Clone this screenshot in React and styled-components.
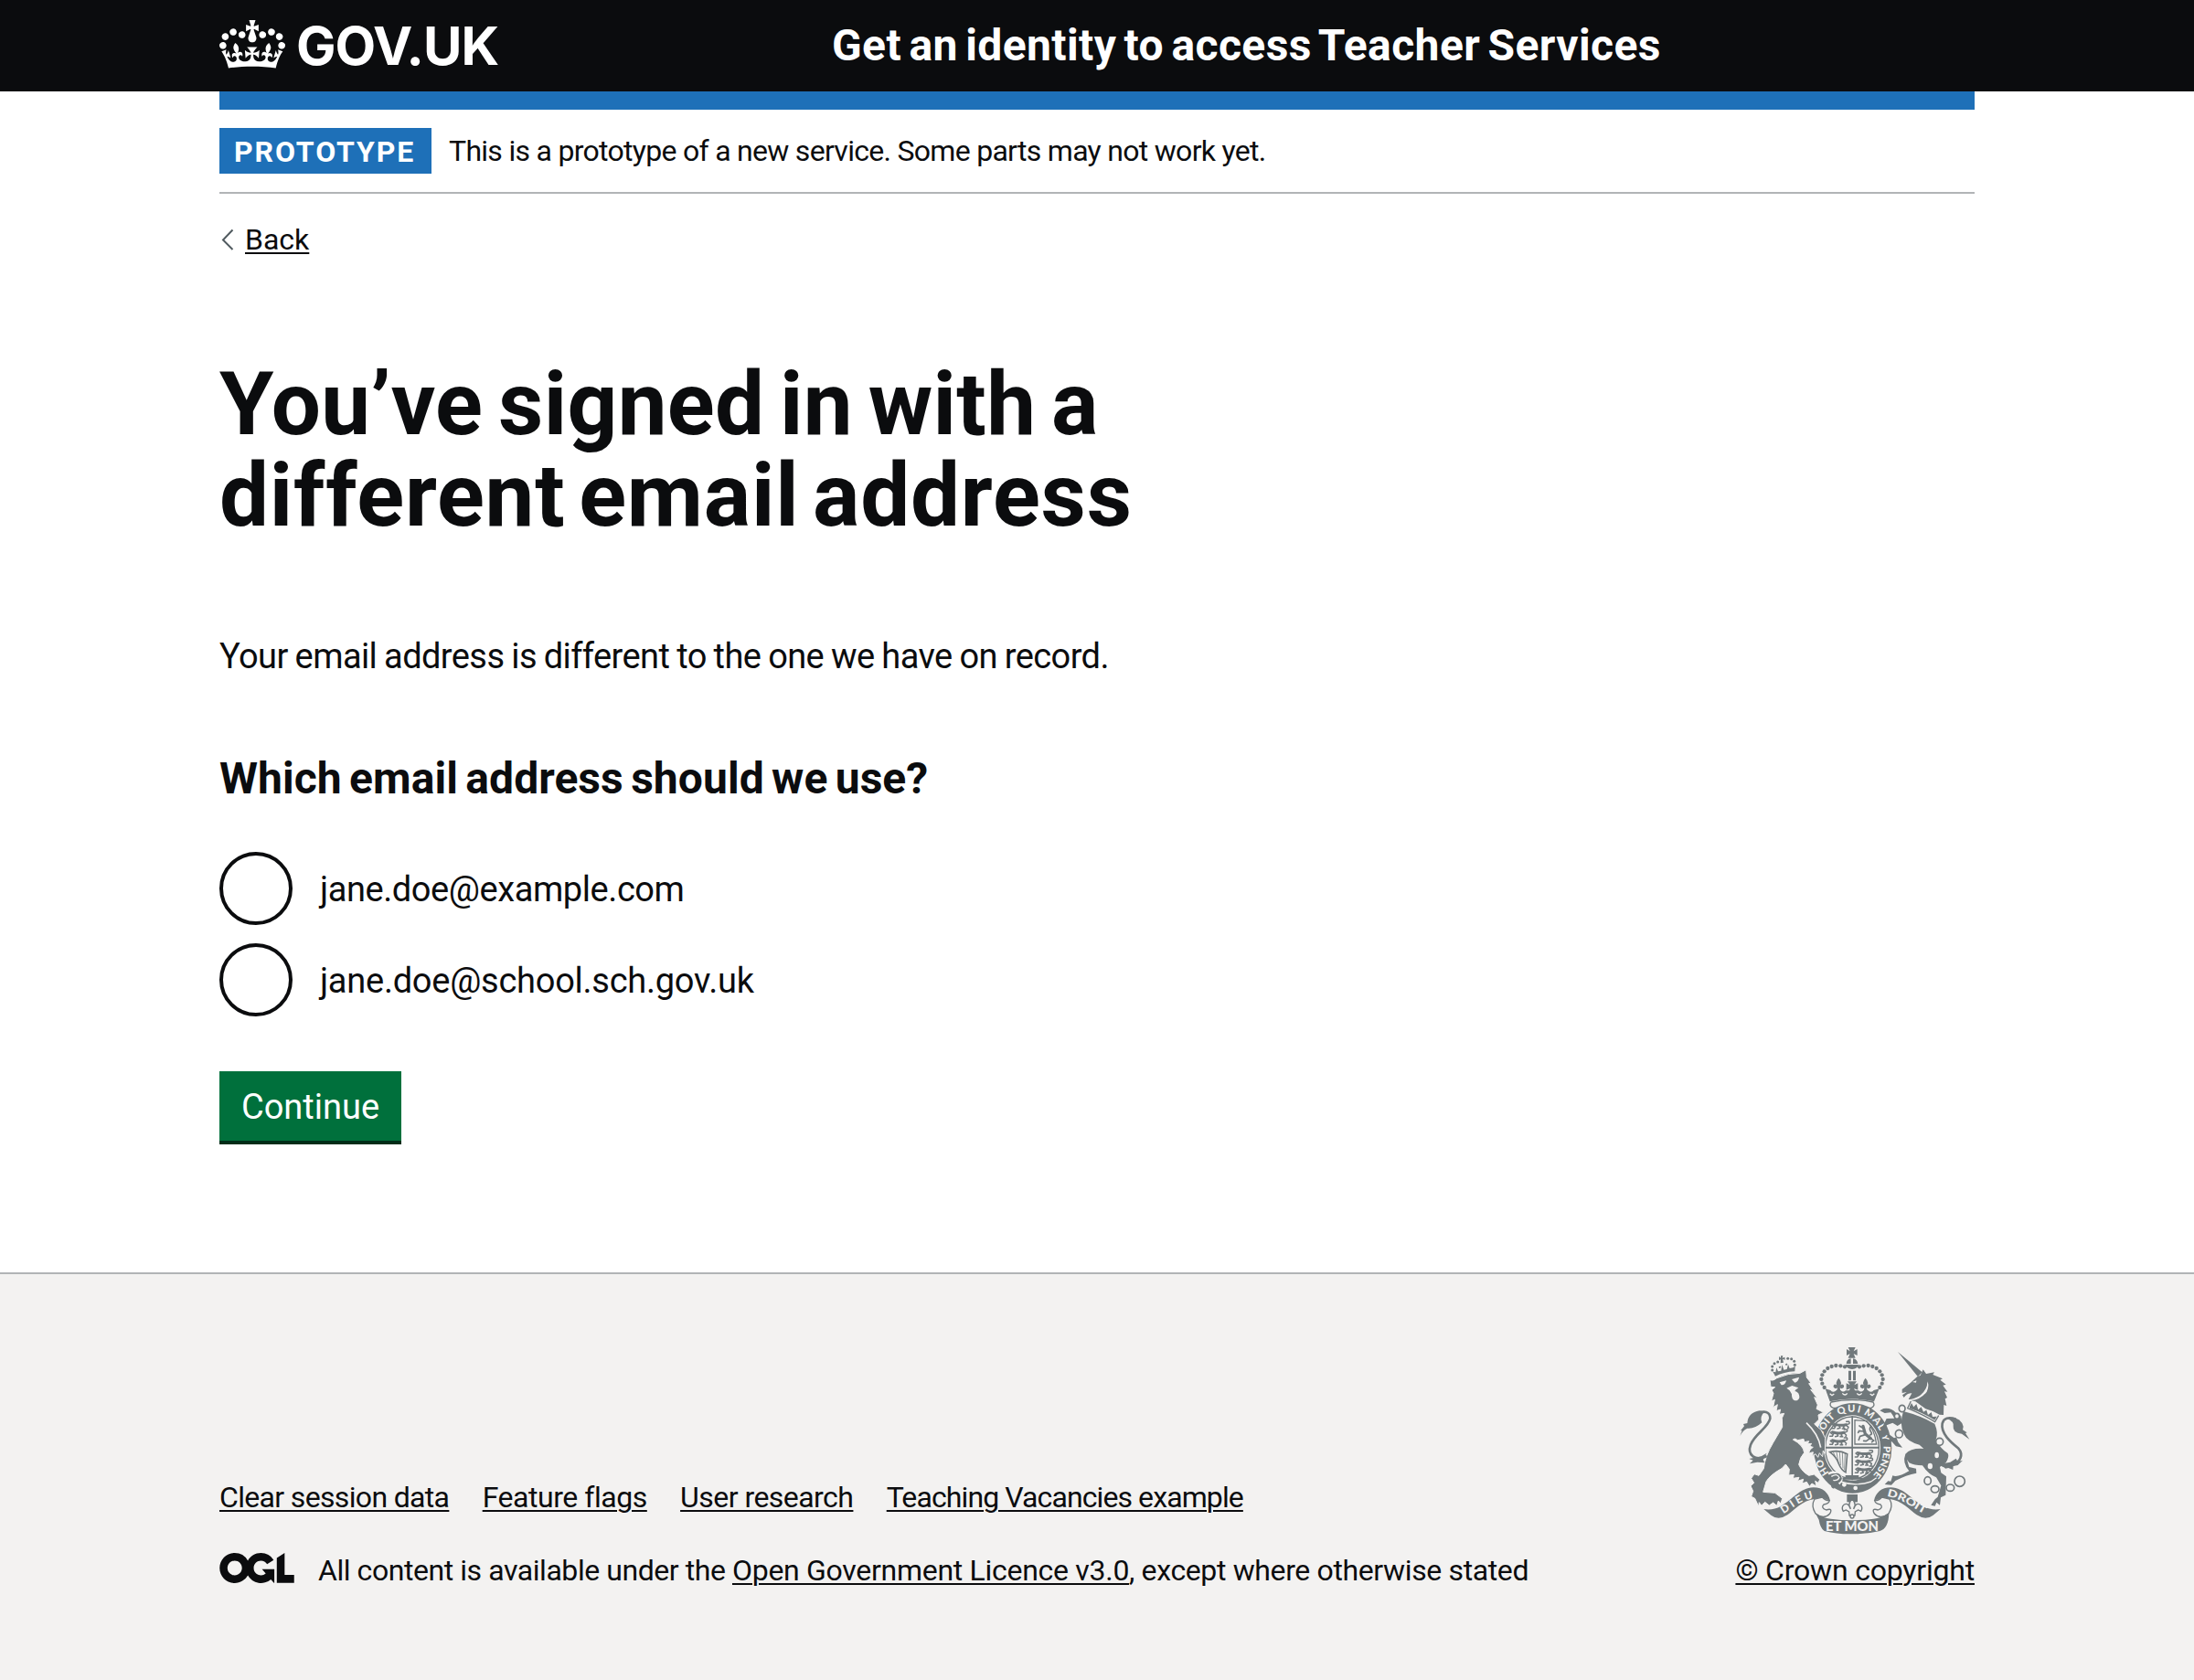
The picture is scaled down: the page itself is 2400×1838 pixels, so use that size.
import React from 'react';
import styled, { createGlobalStyle } from 'styled-components';

const ink = '#0b0c0e';
const blue = '#1e70b8';
const paper = '#f3f2f1';
const crestGrey = '#70787b';

const GlobalStyle = createGlobalStyle`
  *, *::before, *::after { box-sizing: border-box; }
  html, body { margin: 0; padding: 0; background: ${paper}; }
  body {
    font-family: Roboto, "Liberation Sans", sans-serif;
    color: ${ink};
    -webkit-font-smoothing: antialiased;
  }
  h1, h2, p, ul { margin: 0; padding: 0; font-weight: inherit; }
`;

const Page = styled.div`
  display: flex;
  flex-direction: column;
  min-height: 1838px;
  background: #fff;
`;

const Container = styled.div`
  width: 1920px;
  margin: 0 auto;
`;

const Header = styled.header`
  height: 100px;
  background: ${ink};
  color: #fff;
`;

const HeaderRow = styled(Container)`
  display: grid;
  grid-template-columns: 670px 1fr;
  align-items: center;
  height: 100px;
`;

const Brand = styled.a`
  display: flex;
  align-items: center;
  color: #fff;
`;

const Crown = styled.svg`
  width: 72px;
  height: 53px;
  margin-top: -4px;
  fill: currentColor;
`;

const BrandName = styled.span`
  margin-left: 12px;
  font-family: Inter, Roboto, sans-serif;
  font-size: 58px;
  line-height: 70px;
  font-weight: 700;
  letter-spacing: -1px;
`;

const ServiceName = styled.span`
  font-size: 48px;
  line-height: 60px;
  font-weight: 700;
  letter-spacing: 0.4px;
  word-spacing: -4px;
`;

const BlueBar = styled(Container)`
  height: 20px;
  background: ${blue};
`;

const PhaseBanner = styled(Container)`
  display: flex;
  align-items: center;
  gap: 19px;
  height: 92px;
  border-bottom: 2px solid #b1b4b6;
`;

const Tag = styled.strong`
  height: 50px;
  width: 232px;
  padding: 2px 0 0 16px;
  background: ${blue};
  color: #fff;
  font-size: 32px;
  line-height: 48px;
  font-weight: 700;
  letter-spacing: 1.9px;
`;

const Small = styled.span`
  font-size: 32px;
  line-height: 40px;
  white-space: pre;
  letter-spacing: ${(p) => p.$track || 0}px;
`;

const Link = styled.a`
  color: ${ink};
  font-size: 32px;
  line-height: 40px;
  white-space: nowrap;
  letter-spacing: ${(p) => p.$track || 0}px;
  text-decoration: underline;
  text-decoration-thickness: 2px;
  text-underline-offset: 3px;
`;

const Main = styled.main`
  width: 1920px;
  height: 1180px;
  margin: 0 auto;
`;

const BackRow = styled.div`
  display: flex;
  align-items: center;
  padding-top: 30px;
`;

const Chevron = styled.svg`
  width: 14px;
  height: 24px;
  margin: 0 12px 0 2px;
  fill: none;
  stroke: #505a5f;
  stroke-width: 2;
`;

const Title = styled.h1`
  margin-top: 110px;
  font-size: 96px;
  line-height: 100px;
  font-weight: 700;
`;

const TitleLine = styled.span`
  display: block;
  letter-spacing: ${(p) => p.$track || 0}px;
  word-spacing: ${(p) => p.$space || 0}px;
`;

const Lead = styled.p`
  margin-top: 101px;
  font-size: 38px;
  line-height: 50px;
  letter-spacing: -0.59px;
  word-spacing: -1px;
`;

const Question = styled.h2`
  margin-top: 79px;
  font-size: 48px;
  line-height: 60px;
  font-weight: 700;
  letter-spacing: 0.05px;
  word-spacing: -3.6px;
`;

const Radios = styled.div`
  display: flex;
  flex-direction: column;
  gap: 20px;
  margin-top: 50px;
`;

const RadioRow = styled.label`
  display: flex;
  align-items: center;
  gap: 30px;
  height: 80px;
  font-size: 38px;
  letter-spacing: ${(p) => p.$track}px;
`;

const RadioInput = styled.input`
  appearance: none;
  flex: none;
  width: 80px;
  height: 80px;
  margin: 0;
  border: 4px solid ${ink};
  border-radius: 50%;
  background: #fff;
`;

const RadioText = styled.span`
  padding-top: 2px;
  line-height: 50px;
`;

const Button = styled.button`
  display: block;
  margin: 60px 0 0;
  width: 199px;
  height: 76px;
  padding: 2px 0 0;
  border: 0;
  background: #00703c;
  box-shadow: 0 4px 0 #002d18;
  color: #fff;
  font-family: inherit;
  font-size: 38px;
  line-height: 50px;
`;

const Footer = styled.footer`
  flex: 1;
  border-top: 2px solid #b1b4b6;
  background: ${paper};
`;

const FooterRow = styled(Container)`
  display: flex;
  justify-content: space-between;
  align-items: flex-end;
  padding: 66px 0 100px;
`;

const FooterLinks = styled.nav`
  display: flex;
  gap: 36.3px;
  margin-bottom: 40px;
`;

const Licence = styled.div`
  display: flex;
  align-items: center;
`;

const Ogl = styled.svg`
  width: 82px;
  height: 33px;
  margin: 0 26px 6px 0;
  fill: ${ink};
`;

const Copyright = styled.div`
  display: flex;
  flex-direction: column;
  align-items: flex-end;
  gap: 8px;
`;

const CrestSvg = styled.svg`
  display: block;
  width: 260px;
  height: 230px;
`;

const CrestText = styled.text`
  font-family: Lato, sans-serif;
  font-weight: 900;
  font-size: ${(p) => p.$size}px;
  fill: ${paper};
`;

const leftPearls = [[354, 106], [340, 103], [325, 102], [311, 105], [298, 111], [287, 121], [280, 133], [277, 147], [280, 161], [287, 174]];
const smallPearls = [[116, 117], [116, 105], [123, 95], [134, 90], [167, 79], [179, 80], [188, 88], [190, 100]];
const chain = [[542, 243, 10, 11], [525, 268, 8, 9], [532, 326, 12, 13], [665, 352, 12, 12], [626, 480, 11, 13], [650, 508, 13, 11], [700, 503, 13, 11], [731, 482, 17, 17]];

function WalkingLion({ x, y }) {
  return (
    <g transform={`translate(${x} ${y})`} stroke={crestGrey} fill="none" strokeLinecap="round" strokeLinejoin="round">
      <path strokeWidth="9" d="M12 9 Q28 14 47 10" />
      <path strokeWidth="4.5" d="M9 6 L3 10 L9 15 M14 12 L9 22 L1 22 M24 12 L28 21 L19 23 M43 12 L38 18 L43 23 L35 23 M48 12 L55 18 L53 23 M49 9 Q62 8 57 0 L48 0" />
    </g>
  );
}

function Fleur({ x, y, s = 1 }) {
  return (
    <path
      transform={`translate(${x} ${y}) scale(${s})`}
      d="M0 -22 Q13 -8 3 5 Q7 -6 15 -1 Q20 8 9 11 L4 8 L5 16 L12 21 H-12 L-5 16 L-4 8 L-9 11 Q-20 8 -15 -1 Q-7 -6 -3 5 Q-13 -8 0 -22Z"
    />
  );
}

function Crest() {
  return (
    <CrestSvg viewBox="0 0 780 690" fill={crestGrey} role="img">
      {/* royal crown */}
      <path d="M365 42H389L383 55L395 48V69L383 63L389 77H365L371 63L360 69V48L371 55Z" />
      <path d="M359 96Q360 81 374 79V96ZM381 79Q395 81 397 96H381Z" />
      <path d="M356 99H399Q396 113 378 114Q360 113 356 99Z" />
      {leftPearls.map(([x, y]) => (
        <g key={`${x}-${y}`}>
          <circle cx={x} cy={y} r="6.4" />
          <circle cx={756 - x} cy={y} r="6.4" />
        </g>
      ))}
      <path d="M366 119H375V151H366ZM381 119H390V151H381Z" />
      <path d="M363 154H393L385 166L397 160V182L384 177L391 190H365L372 177L359 182V160L371 166Z" />
      <Fleur x={334} y={166} s={1.05} />
      <Fleur x={422} y={166} s={1.05} />
      <path d="M290 178L307 183Q312 191 322 187L330 181L340 184Q348 191 357 184H399Q408 191 416 184L426 181L434 187Q444 191 449 183L467 178L450 220Q378 203 305 220Z" />
      <path d="M346 193Q355 203 362 193M394 193Q401 203 410 193M305 194L312 200L319 195M437 195L444 200L451 194" fill="none" stroke={paper} strokeWidth="4" />
      <path d="M309 222Q378 207 447 222Q455 235 440 241H316Q301 235 309 222Z" fill={paper} stroke={crestGrey} strokeWidth="4" />

      {/* garter and shield */}
      <ellipse cx="380" cy="373" rx="128" ry="148" />
      <ellipse cx="378" cy="372" rx="93" ry="107" fill={paper} />
      <ellipse cx="378" cy="372" rx="88" ry="102" fill="none" stroke={crestGrey} strokeWidth="4" />
      <path d="M376 268H381V478H376ZM288 368H468V374H288Z" />
      <WalkingLion x={311} y={286} />
      <WalkingLion x={304} y={312} />
      <WalkingLion x={304} y={339} />
      <WalkingLion x={387} y={380} />
      <WalkingLion x={387} y={406} />
      <WalkingLion x={387} y={432} />
      <path d="M387 281L426 284Q452 312 458 360H387Z" fill="none" stroke={crestGrey} strokeWidth="4" />
      <g fill="none" stroke={crestGrey} strokeLinecap="round">
        <path strokeWidth="10" d="M414 301L421 326L439 341" />
        <path strokeWidth="5" d="M412 306L402 300M416 318L401 316L398 322M421 329L404 334L400 346M438 340L424 350L416 349M439 341L449 348L443 353M437 330Q446 327 439 318Q433 308 440 302" />
        <path strokeWidth="5" d="M305 386Q334 377 362 392L357 452Q343 446 335 426Q327 402 305 386Z" />
        <path strokeWidth="2.4" d="M317 388L324 404M327 386L332 416M337 386L340 428M346 388L348 438M355 391L353 444" />
      </g>
      <path d="M356 462H400V470H421V476H337V470H356Z" />
      <defs>
        <path id="motto" d="M378 492A103 119 0 0 1 378 254A103 119 0 0 1 378 492" />
        <path id="ribbon-left" d="M150 590C181 573 206 544 262 535" />
        <path id="ribbon-right" d="M490 531C548 540 575 570 620 591" />
      </defs>
      <CrestText $size={32}><textPath href="#motto" startOffset="12.5%" textLength="52">HO</textPath></CrestText>
      <CrestText $size={32}><textPath href="#motto" startOffset="30.6%" textLength="76">SOIT</textPath></CrestText>
      <CrestText $size={33}><textPath href="#motto" startOffset="43.4%" textLength="72">QUI</textPath></CrestText>
      <CrestText $size={33}><textPath href="#motto" startOffset="55.5%" textLength="78">MAL</textPath></CrestText>
      <CrestText $size={30}><textPath href="#motto" startOffset="68.8%">Y</textPath></CrestText>
      <CrestText $size={31}><textPath href="#motto" startOffset="74%" textLength="104" lengthAdjust="spacingAndGlyphs">PENSE</textPath></CrestText>
      <path d="M300 458Q318 445 338 461Q350 475 335 490" fill="none" stroke={paper} strokeWidth="7" />
      <path d="M340 483Q390 500 440 483L458 470" fill="none" stroke={paper} strokeWidth="4" />
      <path d="M310 466Q335 450 340 473Q336 486 320 484Q307 498 320 502" fill="none" stroke={crestGrey} strokeWidth="9" />
      <path d="M310 466Q329 454 336 470Q330 481 316 478" fill="none" stroke={paper} strokeWidth="4" />
      <g fill={paper}>
        <circle cx="352" cy="493" r="7" />
        <circle cx="389" cy="504" r="7" />
      </g>

      {/* lion's crown */}
      {smallPearls.map(([x, y]) => <circle key={`${x}-${y}`} cx={x} cy={y} r="4.5" />)}
      <path d="M138 72L144 77L144 70L151 70L149 77L157 74L158 83L150 81L153 92L143 94L144 82L138 84Z" />
      <path d="M118 122L127 124L130 109L135 121L145 119L148 99L154 116L164 114L168 98L173 111L184 109L191 104L190 121Q154 123 126 137Z" />
      <path d="M138 109L144 106M160 100L165 97" stroke={crestGrey} strokeWidth="5" />

      {/* lion */}
      <path
        stroke={paper}
        strokeWidth="3"
        d="M108 149Q119 154 131 143Q169 126 207 127L227 116L229 141L243 159L236 161L251 184L242 181L264 209L254 206L265 231L261 244L284 256L267 264L269 279L254 294L276 313L290 340L289 391L283 381L281 401L271 389L266 403L258 392L248 398L250 386L235 390L241 377L250 370L239 367L245 358L232 359L236 350L221 353L219 343L200 347L190 342L184 345Q218 363 221 388Q207 402 203 427Q213 450 236 463L253 459L272 476L267 487L257 481L261 498L246 489L238 499L229 484L214 489L218 475L199 481L204 469L184 472L187 460L170 462L172 442L160 426L148 439Q107 462 96 483L86 517L125 520L149 538L144 555L136 546L131 562L119 552L106 561L92 550L81 562L73 551L71 564L59 538L47 532L53 514L45 497L56 487L47 472L57 458L72 463L88 440Q92 399 119 355L149 304L148 274L155 259L139 262L143 246L129 251L133 230L119 239L124 214L113 219L120 193L114 182L125 173L111 172Z"
      />
      <g fill={paper}>
        <path d="M140 157L162 151Q159 167 146 166ZM180 147L204 140Q202 155 190 158ZM163 176L181 168L202 175Q191 181 190 186Q206 190 205 207Q202 218 190 217Q179 213 180 196L173 184Z" />
      </g>
      <path d="M228 290Q267 326 275 371" fill="none" stroke={paper} strokeWidth="5" />
      <path d="M98 399C60 418 33 395 45 362C59 325 102 307 109 276C110 254 89 246 65 263" fill="none" stroke={crestGrey} strokeWidth="8" />
      <path d="M10 333L17 315L12 316L24 301L21 294L34 291Q36 257 74 250L92 252Q73 270 82 289Q60 310 34 308Q20 314 10 333ZM27 403L40 408L55 405L80 400L98 389L86 411L91 421L67 419L42 424L53 413Z" />

      {/* unicorn */}
      <path d="M528 57L608 124L594 139Z" />
      <path d="M591 139L602 134L611 115L621 129L648 124L643 132L675 145L667 149L686 164L676 167L691 188L681 187L690 207L683 211L688 234L679 231L678 264L665 263Q644 251 619 244L586 220L571 216Q602 215 623 188Q632 169 625 154Q626 180 600 201Q575 215 563 213L574 193Q559 191 548 207L543 199L557 189L542 192V180L570 158Z" />
      <path d="M576 156L589 151L588 158Z" fill={paper} />
      <path d="M571 219L560 242Q615 265 650 287L662 266" fill="none" stroke={crestGrey} strokeWidth="4" />
      <path d="M567 236L573 225L580 238L589 228L595 247L605 238L612 254L622 248L627 264L638 255L642 270L656 269L649 281Q611 257 567 243Z" />
      <path d="M546 252Q602 266 649 293Q662 323 653 345Q668 375 692 390Q698 401 686 420L666 435L670 454L687 466L685 527L669 535L666 560L655 551L650 563L637 560L650 541L659 533L670 496L654 469Q629 460 609 430Q581 430 565 421L558 410L565 435L588 440L589 455Q556 461 520 480L507 494L485 492L496 481L505 482L511 463Q529 470 565 448Q542 421 553 392Q571 372 613 375L599 362Q557 350 548 326Q532 296 546 252Z" />
      <path d="M469 250L481 243Q506 239 522 257L538 267L542 290L527 300L511 290L491 298L491 322L516 340L523 337L529 353L543 371L522 367L507 350L501 359L500 338L478 316V303L491 276L518 275L505 256L485 258Z" />
      <path d="M663 420Q681 441 703 430C735 420 744 394 727 374C704 355 668 326 674 292Q681 266 719 278" fill="none" stroke={crestGrey} strokeWidth="8" />
      <path d="M690 275Q734 267 743 302L741 313L755 322L750 324L763 344L738 326Q707 323 710 300Q713 286 690 275ZM664 415L679 423L700 419L719 407L725 418L741 413L725 429L710 432L709 444L694 438L684 440Z" />
      <g stroke={crestGrey} strokeWidth="5">
        {chain.map(([x, y, rx, ry]) => <ellipse key={x} cx={x} cy={y} rx={rx} ry={ry} fill={paper} />)}
      </g>
      <ellipse cx="656" cy="396" rx="7" ry="10" fill={paper} />
      <ellipse cx="634" cy="432" rx="8" ry="10" fill={paper} />

      {/* ribbon and motto */}
      <g fill={paper} stroke={crestGrey} strokeWidth="4">
        <path d="M255 540Q242 562 258 588Q286 609 305 588Q316 568 293 576Q274 568 285 558Q302 556 304 545Q291 546 280 534Z" />
        <path d="M501 540Q514 562 498 588Q470 609 451 588Q440 568 463 576Q482 568 471 558Q454 556 452 545Q465 546 476 534Z" />
      </g>
      <path d="M88 573Q118 578 145 563C185 540 205 505 251 502C283 502 300 520 306 545Q289 541 278 534L255 540C216 544 187 577 166 592Q136 612 112 593Z" />
      <path d="M668 573Q638 578 611 563C571 540 551 505 505 502C473 502 456 520 450 545Q467 541 478 534L501 540C540 544 569 577 590 592Q620 612 644 593Z" />
      <path d="M257 585Q281 603 308 605Q378 614 448 605Q475 603 499 585Q498 636 469 645Q425 656 378 655Q331 656 287 645Q273 635 269 608Z" />
      <CrestText $size={35}><textPath href="#ribbon-left" startOffset="3" textLength="112">DIEU</textPath></CrestText>
      <CrestText $size={34}><textPath href="#ribbon-right" startOffset="2" textLength="136" lengthAdjust="spacingAndGlyphs">DROIT</textPath></CrestText>
      <CrestText $size={47} x="291" y="645" textLength="174" lengthAdjust="spacingAndGlyphs">ET MON</CrestText>
      <path d="M361 525H396V550H361Z" />
      <g stroke={crestGrey} strokeWidth="4" fill={paper}>
        <path d="M378 540Q394 555 383 573Q389 551 404 558Q415 566 407 580L398 576L388 582L387 594H369L368 582L358 576L349 580Q341 566 352 558Q367 551 373 573Q362 555 378 540Z" />
        <circle cx="378" cy="597" r="6" />
      </g>
    </CrestSvg>
  );
}

const radios = [
  { email: 'jane.doe@example.com', track: -0.42 },
  { email: 'jane.doe@school.sch.gov.uk', track: -0.25 },
];

const footerLinks = [
  { label: 'Clear session data', track: -0.66 },
  { label: 'Feature flags', track: -0.46 },
  { label: 'User research', track: -0.54 },
  { label: 'Teaching Vacancies example', track: -0.9 },
];

export default function App() {
  return (
    <>
      <GlobalStyle />
      <Page>
        <Header>
          <HeaderRow>
            <Brand>
              <Crown viewBox="0 0 132 97">
                <path fillRule="evenodd" d="M25 30.2c3.5 1.5 7.7-.2 9.1-3.7 1.5-3.6-.2-7.8-3.9-9.2-3.6-1.4-7.6.3-9.1 3.9-1.4 3.5.3 7.5 3.9 9zM9 39.5c3.6 1.5 7.8-.2 9.2-3.7 1.5-3.6-.2-7.8-3.9-9.1-3.6-1.5-7.6.2-9.1 3.8-1.4 3.5.3 7.5 3.8 9zM4.4 57.2c3.5 1.5 7.7-.2 9.1-3.8 1.5-3.6-.2-7.7-3.9-9.1-3.5-1.5-7.6.3-9.1 3.8-1.4 3.5.3 7.6 3.9 9.1zm38.3-21.4c3.5 1.5 7.7-.2 9.1-3.8 1.5-3.6-.2-7.7-3.9-9.1-3.6-1.5-7.6.3-9.1 3.8-1.3 3.6.4 7.7 3.9 9.1zm64.4-5.6c-3.6 1.5-7.8-.2-9.1-3.7-1.5-3.6.2-7.8 3.8-9.2 3.6-1.4 7.7.3 9.2 3.9 1.3 3.5-.4 7.5-3.9 9zm15.9 9.3c-3.6 1.5-7.7-.2-9.1-3.7-1.5-3.6.2-7.8 3.7-9.1 3.6-1.5 7.7.2 9.2 3.8 1.5 3.5-.3 7.5-3.8 9zm4.7 17.7c-3.6 1.5-7.8-.2-9.2-3.8-1.5-3.6.2-7.7 3.9-9.1 3.6-1.5 7.7.3 9.2 3.8 1.3 3.5-.4 7.6-3.9 9.1zM89.3 35.8c-3.6 1.5-7.8-.2-9.2-3.8-1.4-3.6.2-7.7 3.9-9.1 3.6-1.5 7.7.3 9.2 3.8 1.4 3.6-.3 7.7-3.9 9.1zM69.7 17.7l8.9 4.7V9.3l-8.9 2.8c-.2-.3-.5-.6-.9-.9L72.4 0H59.6l3.5 11.2c-.3.3-.6.5-.9.9l-8.8-2.8v13.1l8.8-4.7c.3.3.6.7.9.9l-5 15.4v.1c-.2.8-.4 1.6-.4 2.4 0 4.1 3.1 7.5 7 8.1h.2c.3 0 .7.1 1 .1.4 0 .7 0 1-.1h.2c4-.6 7.1-4.1 7.1-8.1 0-.8-.1-1.7-.4-2.4V34l-5.1-15.4c.4-.2.7-.6 1-.9zM66 92.8c16.9 0 32.8 1.1 47.1 3.2 4-16.9 8.9-26.7 14-33.5l-9.6-3.4c1 4.9 1.1 7.2 0 10.2-1.5-1.4-3-4.3-4.2-8.7L108.6 76c2.8-2 5-3.2 7.5-3.3-4.4 9.4-10 11.9-13.6 11.2-4.3-.8-6.3-4.6-5.6-7.9 1-4.7 5.7-5.9 8-.5 4.3-8.7-3-11.4-7.6-8.8 7.1-7.2 7.9-13.5 2.1-21.1-8 6.1-8.1 12.3-4.5 20.8-4.7-5.4-12.1-2.5-9.5 6.2 3.4-5.2 7.9-2 7.2 3.1-.6 4.3-6.4 7.8-13.5 7.2-10.3-.9-10.9-8-11.2-13.8 2.5-.5 7.1 1.8 11 7.3L80.2 60c-4.1 4.4-8 5.3-12.3 5.4 1.4-4.4 8-11.6 8-11.6H55.5s6.4 7.2 7.9 11.6c-4.2-.1-8-1-12.3-5.4l1.4 16.4c3.9-5.5 8.5-7.7 10.9-7.3-.3 5.8-.9 12.8-11.1 13.8-7.2.6-12.9-2.9-13.5-7.2-.7-5 3.8-8.3 7.1-3.1 2.7-8.7-4.6-11.6-9.4-6.2 3.7-8.5 3.6-14.7-4.6-20.8-5.8 7.6-5 13.9 2.2 21.1-4.7-2.6-11.9.1-7.7 8.8 2.3-5.5 7.1-4.2 8.1.5.7 3.3-1.3 7.1-5.7 7.9-3.5.7-9-1.8-13.5-11.2 2.5.1 4.7 1.3 7.5 3.3l-4.7-15.4c-1.2 4.4-2.7 7.2-4.3 8.7-1.1-3-.9-5.3 0-10.2l-9.5 3.4c5 6.9 9.9 16.7 14 33.5 14.8-2.1 30.8-3.2 47.7-3.2z" />
              </Crown>
              <BrandName>GOV.UK</BrandName>
            </Brand>
            <ServiceName>Get an identity to access Teacher Services</ServiceName>
          </HeaderRow>
        </Header>
        <BlueBar />
        <PhaseBanner>
          <Tag>PROTOTYPE</Tag>
          <Small $track={-0.71}>This is a prototype of a new service. Some parts may not work yet.</Small>
        </PhaseBanner>
        <Main>
          <BackRow>
            <Chevron viewBox="0 0 14 24"><path d="M12.5 1.5L2 12.5L12.5 23" /></Chevron>
            <Link>Back</Link>
          </BackRow>
          <Title>
            <TitleLine $track={0.35} $space={-7.5}>You’ve signed in with a</TitleLine>
            <TitleLine $track={0.8} $space={-10}>different email address</TitleLine>
          </Title>
          <Lead>Your email address is different to the one we have on record.</Lead>
          <Question>Which email address should we use?</Question>
          <Radios>
            {radios.map((r) => (
              <RadioRow key={r.email} $track={r.track}>
                <RadioInput type="radio" name="email" />
                <RadioText>{r.email}</RadioText>
              </RadioRow>
            ))}
          </Radios>
          <Button>Continue</Button>
        </Main>
        <Footer>
          <FooterRow>
            <div>
              <FooterLinks>
                {footerLinks.map((l) => <Link key={l.label} $track={l.track}>{l.label}</Link>)}
              </FooterLinks>
              <Licence>
                <Ogl viewBox="0 0 483.2 195.7">
                  <path d="M421.5 142.8V.1l-50.7 32.3v161.1h112.4v-50.7zm-122.3-9.6A47.12 47.12 0 0 1 221 97.8c0-26 21.1-47.1 47.1-47.1 16.7 0 31.4 8.7 39.7 21.8l42.7-27.2A97.63 97.63 0 0 0 268.1 0c-36.5 0-68.3 20.1-85.1 49.7A98 98 0 0 0 97.8 0C43.9 0 0 43.9 0 97.8s43.9 97.8 97.8 97.8c36.5 0 68.3-20.1 85.1-49.7a97.76 97.76 0 0 0 149.6 25.4l19.4 22.2h3v-87.8h-80l24.3 27.5zM97.8 145c-26 0-47.1-21.1-47.1-47.1s21.1-47.1 47.1-47.1 47.1 21.1 47.1 47.1S123.8 145 97.8 145" />
                </Ogl>
                <Small $track={-0.44}>{'All content is available under the '}</Small>
                <Link $track={-0.29}>Open Government Licence v3.0</Link>
                <Small $track={-0.37}>, except where otherwise stated</Small>
              </Licence>
            </div>
            <Copyright>
              <Crest />
              <Link $track={-0.2}>© Crown copyright</Link>
            </Copyright>
          </FooterRow>
        </Footer>
      </Page>
    </>
  );
}
